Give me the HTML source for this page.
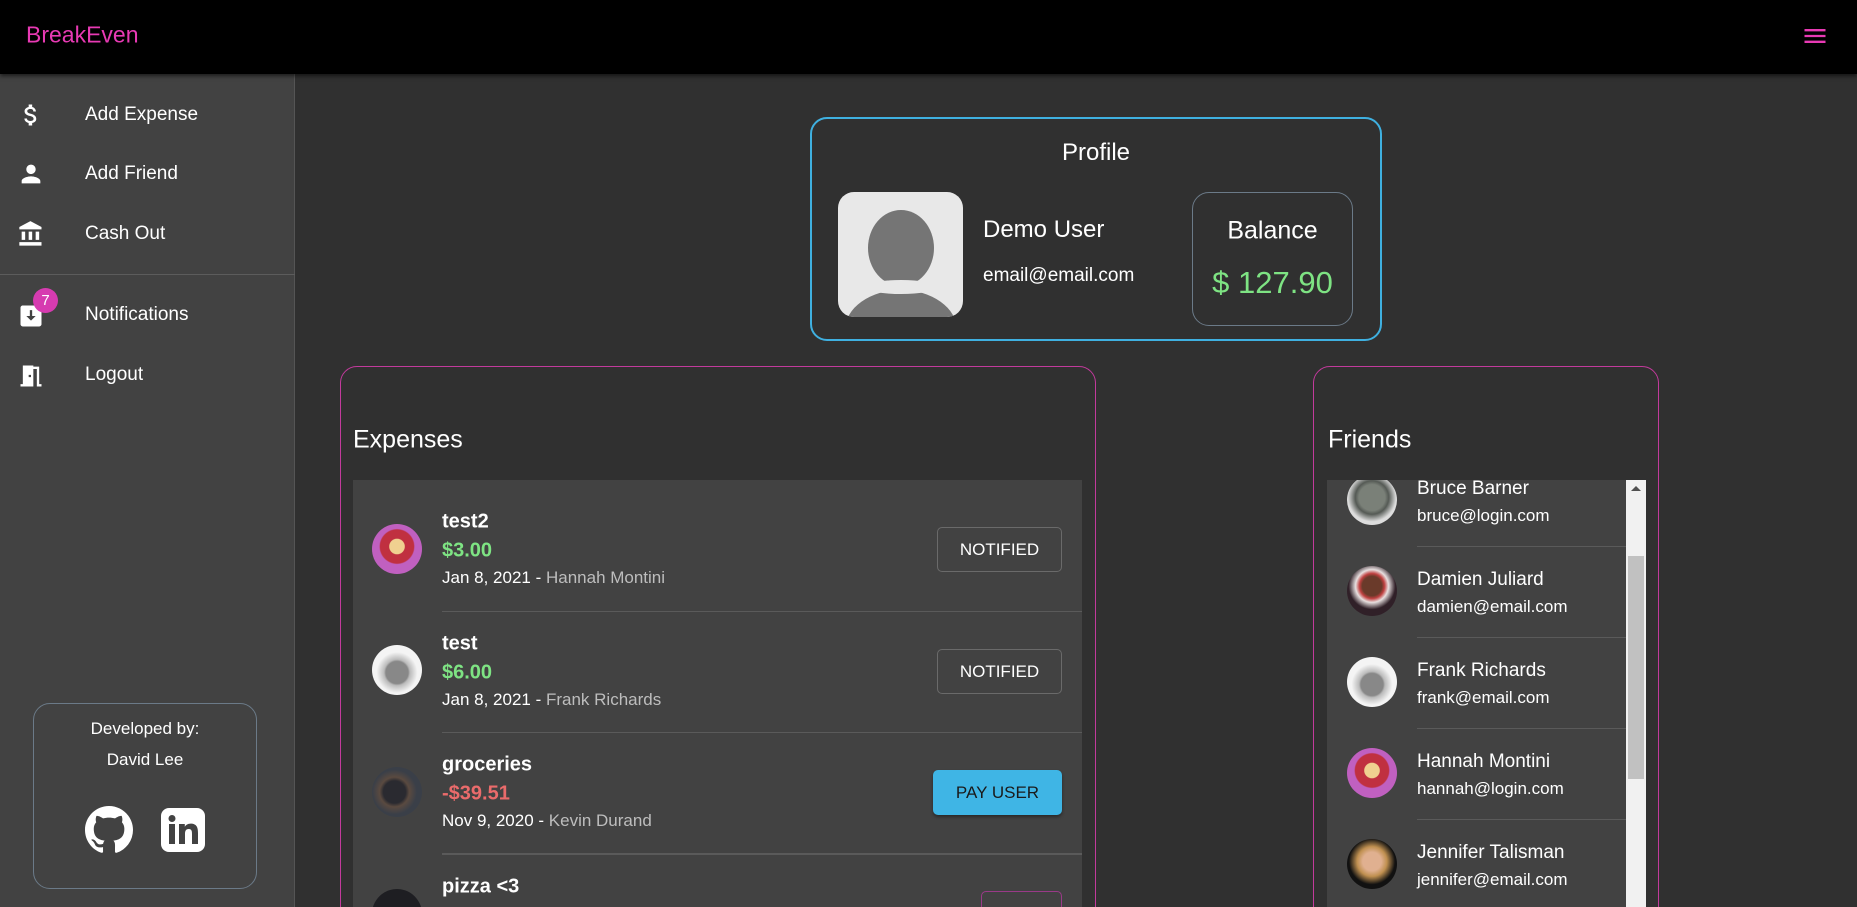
<!DOCTYPE html>
<html><head><meta charset="utf-8"><style>
*{box-sizing:border-box;margin:0;padding:0}
html,body{width:1857px;height:907px;overflow:hidden}
body{background:#303030;font-family:"Liberation Sans",Arial,sans-serif;color:#fff}
#wrap{position:relative;width:1857px;height:907px;overflow:hidden}
.abs{position:absolute}
#hdr{left:0;top:0;width:1857px;height:74px;background:#000;box-shadow:0 2px 4px rgba(0,0,0,.6);z-index:2}
#side{left:0;top:74px;width:295px;height:833px;background:#424242;border-right:1px solid #555}
.mi{position:absolute;left:85px;font-size:19px;transform:translateY(-50%)}
.ic{position:absolute;left:17px;width:28px;height:28px;transform:translateY(-50%)}
.card{position:absolute;border-radius:17px}
.av{position:absolute;border-radius:50%;width:50px;height:50px}
.t{position:absolute;white-space:nowrap;transform:translateY(-50%)}
.btn{position:absolute;border:1px solid #6a6a6a;border-radius:5px;font-size:17px;display:flex;align-items:center;justify-content:center;color:#fff}
.div{position:absolute;height:1px;background:#5a5a5a}
</style></head><body><div id="wrap">
<div id="hdr" class="abs">
 <div class="t" style="left:26px;top:35px;font-size:23px;color:#e83ab4">BreakEven</div>
 <svg class="abs" style="left:1801px;top:22px" width="28" height="28" viewBox="0 0 24 24"><path d="M3 6h18v2H3zM3 11h18v2H3zM3 16h18v2H3z" fill="#e83ab4"/></svg>
</div>
<div id="side" class="abs"></div>
<svg class="ic" style="top:115px" viewBox="0 0 24 24"><path fill="#fff" d="M11.8 10.9c-2.27-.59-3-1.2-3-2.15 0-1.09 1.01-1.850 2.7-1.85 1.78 0 2.44.85 2.5 2.1h2.21c-.07-1.72-1.12-3.3-3.21-3.81V3h-3v2.16c-1.94.42-3.5 1.68-3.5 3.61 0 2.31 1.91 3.46 4.7 4.13 2.5.6 3 1.48 3 2.41 0 .69-.49 1.79-2.7 1.79-2.06 0-2.87-.92-2.98-2.1h-2.2c.12 2.19 1.76 3.42 3.68 3.83V21h3v-2.150c1.95-.37 3.5-1.5 3.5-3.55 0-2.84-2.43-3.81-4.7-4.4z"/></svg>
<div class="mi" style="top:115px">Add Expense</div>
<svg class="ic" style="top:174px" viewBox="0 0 24 24"><path fill="#fff" d="M12 12c2.21 0 4-1.79 4-4s-1.79-4-4-4-4 1.79-4 4 1.79 4 4 4zm0 2c-2.67 0-8 1.34-8 4v2h16v-2c0-2.66-5.33-4-8-4z"/></svg>
<div class="mi" style="top:174px">Add Friend</div>
<svg class="ic" style="top:234px" viewBox="0 0 24 24"><path fill="#fff" d="M4 10v7h3v-7H4zm6 0v7h3v-7h-3zM2 22h19v-3H2v3zm14-12v7h3v-7h-3zm-4.5-9L2 6v2h19V6l-9.5-5z"/></svg>
<div class="mi" style="top:234px">Cash Out</div>
<div class="abs" style="left:0;top:274px;width:295px;height:1px;background:#5c5c5c"></div>
<svg class="ic" style="top:316px" viewBox="0 0 24 24"><path fill="#fff" d="M19 3H5c-1.1 0-2 .9-2 2v14c0 1.1.9 2 2 2h14c1.1 0 2-.9 2-2V5c0-1.1-.9-2-2-2zm-3 9l-4 4-4-4h3V7h2v5h3z"/></svg>
<div class="abs" style="left:33px;top:288px;width:25px;height:25px;border-radius:50%;background:#d63bb0;font-size:15px;text-align:center;line-height:25px">7</div>
<div class="mi" style="top:315px">Notifications</div>
<svg class="ic" style="top:376px" viewBox="0 0 24 24"><path fill="#fff" d="M14 6v15H3v-2h2V3h9v1h5v15h2v2h-4V6h-3zm-4 5v2h2v-2h-2z"/></svg>
<div class="mi" style="top:375px">Logout</div>
<div class="card" style="left:33px;top:703px;width:224px;height:186px;border:1px solid #6b7a88"></div>
<div class="t" style="left:33px;width:224px;text-align:center;top:729px;font-size:17px">Developed by:</div>
<div class="t" style="left:33px;width:224px;text-align:center;top:760px;font-size:17px">David Lee</div>
<svg class="abs" style="left:85px;top:806px" width="48" height="48" viewBox="0 0 16 16"><path fill="#fff" d="M8 0C3.58 0 0 3.58 0 8c0 3.54 2.29 6.53 5.47 7.59.4.07.55-.17.55-.38 0-.19-.01-.82-.01-1.49-2.01.37-2.530-.49-2.69-.94-.09-.23-.48-.94-.82-1.13-.28-.15-.68-.52-.01-.53.63-.01 1.08.58 1.23.82.72 1.21 1.87.87 2.33.66.07-.52.28-.87.51-1.07-1.78-.2-3.64-.89-3.64-3.95 0-.87.31-1.59.82-2.15-.08-.2-.36-1.02.08-2.12 0 0 .67-.21 2.2.82.64-.18 1.32-.27 2-.27.68 0 1.36.09 2 .27 1.53-1.04 2.2-.82 2.2-.82.44 1.1.16 1.92.08 2.12.51.56.82 1.27.82 2.15 0 3.07-1.87 3.75-3.65 3.95.29.25.54.73.54 1.48 0 1.07-.01 1.93-.01 2.2 0 .21.15.46.55.38A8.013 8.013 0 0016 8c0-4.42-3.58-8-8-8z"/></svg>
<svg class="abs" style="left:159px;top:806px" width="48" height="48" viewBox="0 0 24 24"><rect x="1" y="1" width="22" height="22" rx="4" fill="#fff"/><path fill="#424242" d="M5 9h3v10H5zM6.5 4.5a1.75 1.75 0 110 3.5 1.75 1.75 0 010-3.5zM10 9h2.9v1.4c.4-.8 1.4-1.6 2.9-1.6 3.1 0 3.7 2 3.7 4.7V19h-3v-4.9c0-1.2 0-2.6-1.6-2.6s-1.9 1.2-1.9 2.5v5H10z"/></svg>
<div class="card" style="left:810px;top:117px;width:572px;height:224px;border:2px solid #3fb0e0"></div>
<div class="t" style="left:810px;width:572px;text-align:center;top:153px;font-size:24px">Profile</div>
<div class="abs" style="left:838px;top:192px;width:125px;height:125px;border-radius:16px;background:#e8e8e8;overflow:hidden">
 <div class="abs" style="left:30px;top:18px;width:66px;height:76px;border-radius:50%;background:#757575"></div>
 <div class="abs" style="left:7px;top:98px;width:112px;height:80px;border-radius:50%;background:#757575"></div>
 <div class="abs" style="left:28px;top:88px;width:70px;height:14px;border-radius:50%;background:#e8e8e8"></div>
</div>
<div class="t" style="left:983px;top:230px;font-size:24px">Demo User</div>
<div class="t" style="left:983px;top:276px;font-size:19px">email@email.com</div>
<div class="card" style="left:1192px;top:192px;width:161px;height:134px;border:1px solid #6b7a88"></div>
<div class="t" style="left:1192px;width:161px;text-align:center;top:231px;font-size:25px">Balance</div>
<div class="t" style="left:1192px;width:161px;text-align:center;top:283px;font-size:31px;color:#7ee383">$ 127.90</div>
<div class="card" style="left:340px;top:366px;width:756px;height:600px;border:1px solid #c23a9c"></div>
<div class="t" style="left:353px;top:440px;font-size:25px">Expenses</div>
<div class="abs" style="left:353px;top:480px;width:729px;height:440px;background:#424242"></div>
<div class="av" style="left:372px;top:524px;background:radial-gradient(circle at 50% 45%,#f0d090 0 20%,#c03040 22% 45%,#c060c0 48%)"></div>
<div class="t" style="left:442px;top:522px;font-size:20px;font-weight:bold">test2</div>
<div class="t" style="left:442px;top:551px;font-size:20px;font-weight:bold;color:#7ee383">$3.00</div>
<div class="t" style="left:442px;top:578px;font-size:17px">Jan 8, 2021 - <span style="color:#bdbdbd">Hannah Montini</span></div>
<div class="btn" style="left:937px;top:527px;width:125px;height:45px">NOTIFIED</div>
<div class="div" style="left:442px;top:611px;width:640px"></div>
<div class="av" style="left:372px;top:645px;background:radial-gradient(circle at 50% 55%,#888 0 30%,#bbb 35%,#f4f4f4 55%)"></div>
<div class="t" style="left:442px;top:644px;font-size:20px;font-weight:bold">test</div>
<div class="t" style="left:442px;top:673px;font-size:20px;font-weight:bold;color:#7ee383">$6.00</div>
<div class="t" style="left:442px;top:700px;font-size:17px">Jan 8, 2021 - <span style="color:#bdbdbd">Frank Richards</span></div>
<div class="btn" style="left:937px;top:649px;width:125px;height:45px">NOTIFIED</div>
<div class="div" style="left:442px;top:732px;width:640px"></div>
<div class="av" style="left:372px;top:767px;background:radial-gradient(circle at 45% 50%,#2a2a30 0 30%,#5a4a40 40%,#3a3f48 60%)"></div>
<div class="t" style="left:442px;top:765px;font-size:20px;font-weight:bold">groceries</div>
<div class="t" style="left:442px;top:794px;font-size:20px;font-weight:bold;color:#ea6b6b">-$39.51</div>
<div class="t" style="left:442px;top:821px;font-size:17px">Nov 9, 2020 - <span style="color:#bdbdbd">Kevin Durand</span></div>
<div class="btn" style="left:933px;top:770px;width:129px;height:45px;background:#3fb5e5;border:none;color:#1a1a1a;box-shadow:0 2px 3px rgba(0,0,0,.4)">PAY USER</div>
<div class="div" style="left:442px;top:853px;width:640px;height:2px"></div>
<div class="av" style="left:372px;top:889px;background:#1e1e22"></div>
<div class="t" style="left:442px;top:887px;font-size:20px;font-weight:bold">pizza &lt;3</div>
<div class="abs" style="left:981px;top:891px;width:81px;height:30px;border:1px solid #9a3a88;border-radius:5px"></div>
<div class="card" style="left:1313px;top:366px;width:346px;height:600px;border:1px solid #c23a9c"></div>
<div class="t" style="left:1328px;top:440px;font-size:25px">Friends</div>
<div class="abs" style="left:1327px;top:480px;width:299px;height:440px;background:#424242;overflow:hidden">
 <div class="av" style="left:20px;top:-5px;background:radial-gradient(circle at 50% 45%,#7a8078 0 35%,#555a55 45%,#ddd 65%)"></div>
 <div class="t" style="left:90px;top:9px;font-size:19px">Bruce Barner</div>
 <div class="t" style="left:90px;top:36px;font-size:17px">bruce@login.com</div>
 <div class="div" style="left:90px;top:66px;width:210px"></div>
 <div class="av" style="left:20px;top:86px;background:radial-gradient(circle at 50% 40%,#6a3a2a 0 25%,#c04040 32%,#e8e0e0 42%,#302028 60%)"></div>
 <div class="t" style="left:90px;top:100px;font-size:19px">Damien Juliard</div>
 <div class="t" style="left:90px;top:127px;font-size:17px">damien@email.com</div>
 <div class="div" style="left:90px;top:157px;width:210px"></div>
 <div class="av" style="left:20px;top:177px;background:radial-gradient(circle at 50% 55%,#888 0 30%,#bbb 35%,#f4f4f4 55%)"></div>
 <div class="t" style="left:90px;top:191px;font-size:19px">Frank Richards</div>
 <div class="t" style="left:90px;top:218px;font-size:17px">frank@email.com</div>
 <div class="div" style="left:90px;top:248px;width:210px"></div>
 <div class="av" style="left:20px;top:268px;background:radial-gradient(circle at 50% 45%,#f0d090 0 20%,#c03040 22% 45%,#c060c0 48%)"></div>
 <div class="t" style="left:90px;top:282px;font-size:19px">Hannah Montini</div>
 <div class="t" style="left:90px;top:309px;font-size:17px">hannah@login.com</div>
 <div class="div" style="left:90px;top:339px;width:210px"></div>
 <div class="av" style="left:20px;top:359px;background:radial-gradient(circle at 50% 45%,#e0b090 0 25%,#c09050 40%,#111 62%)"></div>
 <div class="t" style="left:90px;top:373px;font-size:19px">Jennifer Talisman</div>
 <div class="t" style="left:90px;top:400px;font-size:17px">jennifer@email.com</div>
</div>
<div class="abs" style="left:1626px;top:480px;width:20px;height:440px;background:#f1f1f1"></div>
<div class="abs" style="left:1631px;top:486px;width:0;height:0;border-left:5px solid transparent;border-right:5px solid transparent;border-bottom:5px solid #505050"></div>
<div class="abs" style="left:1628px;top:556px;width:16px;height:223px;background:#c1c1c1"></div>
</div></body></html>
